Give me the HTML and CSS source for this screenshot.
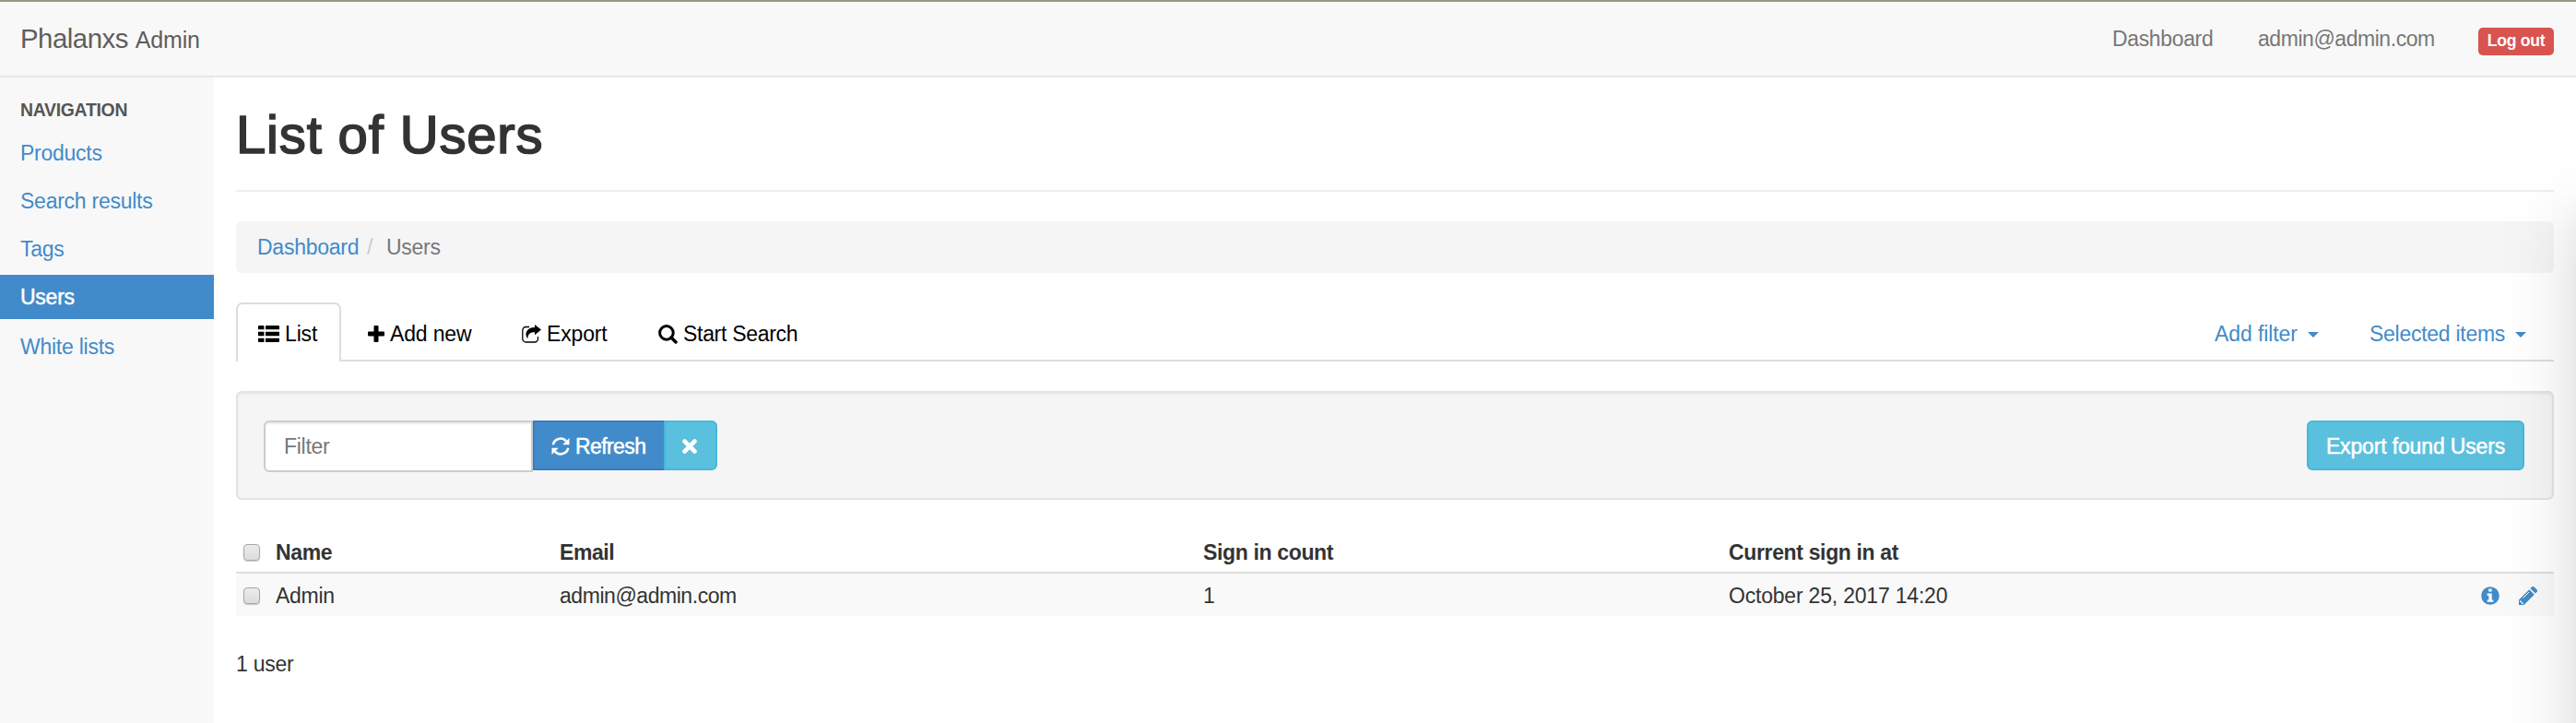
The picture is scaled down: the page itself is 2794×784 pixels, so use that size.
FILE: index.html
```html
<!DOCTYPE html>
<html lang="en">
<head>
<meta charset="utf-8">
<title>List of Users</title>
<link rel="stylesheet" href="styles.css">
</head>
<body>
<header class="navbar">
  <a class="brand"><span class="brand-name">Phalanxs</span> <small>Admin</small></a>
  <nav class="nav-right">
    <a class="nav-dash">Dashboard</a>
    <a class="nav-mail">admin@admin.com</a>
    <a class="label-danger"><span>Log out</span></a>
  </nav>
</header>
<div class="page">
  <aside class="sidebar">
    <div class="side-head"><span>NAVIGATION</span></div>
    <a class="side-link">Products</a>
    <a class="side-link">Search results</a>
    <a class="side-link">Tags</a>
    <a class="side-link active">Users</a>
    <a class="side-link last">White lists</a>
  </aside>
  <main class="content">
    <h1><span>List of Users</span></h1>
    <div class="breadcrumb"><a>Dashboard</a><i>/</i><span>Users</span></div>
    <div class="tabs">
      <a class="tab tab-active"><svg width="23" height="18" viewBox="0 0 23 18"><path d="M1 0h4.500a1 1 0 0 1 1 1v3.200H0V1a1 1 0 0 1 1-1zM9 0h13a1 1 0 0 1 1 1v3.200H8V1a1 1 0 0 1 1-1zM0 6.800h6.500v4.400H0zM8 6.800h15v4.400H8zM0 13.800h6.500V18H1a1 1 0 0 1-1-1zM8 13.800h15V17a1 1 0 0 1-1 1H8z"/></svg><span>List</span></a>
      <a class="tab tab-add"><svg width="18" height="18" viewBox="0 0 18 18"><path d="M7.500 0h3a1 1 0 0 1 1 1V6.500H17a1 1 0 0 1 1 1v3a1 1 0 0 1-1 1h-5.500V17a1 1 0 0 1-1 1h-3a1 1 0 0 1-1-1v-5.500H1a1 1 0 0 1-1-1v-3a1 1 0 0 1 1-1h5.500V1a1 1 0 0 1 1-1z"/></svg><span>Add new</span></a>
      <a class="tab tab-export"><svg width="21" height="20" viewBox="0 0 21 20"><path d="M8 2.500H4.500A3.700 3.700 0 0 0 .8 6.200v9A3.700 3.700 0 0 0 4.500 19h9.300a3.700 3.700 0 0 0 3.700-3.700V13" fill="none" stroke="#000" stroke-width="1.300"/><path d="M14 0 21 5.500l-7 5.700V8.300C9.500 8.300 6.500 10 6.300 15.500 2.500 10.500 4.500 3 14 3z"/></svg><span>Export</span></a>
      <a class="tab tab-search"><svg width="21" height="21" viewBox="0 0 21 21"><circle cx="8.900" cy="8.900" r="7.300" fill="none" stroke="#000" stroke-width="3"/><path d="m14 14 5 5" stroke="#000" stroke-width="3.400" stroke-linecap="round"/></svg><span>Start Search</span></a>
      <div class="tabs-right">
        <a class="drop"><span>Add filter</span><b class="caret"></b></a>
        <a class="drop drop-sel"><span>Selected items</span><b class="caret"></b></a>
      </div>
    </div>
    <div class="well">
      <div class="filter">
        <div class="input"><span>Filter</span></div>
        <div class="btn btn-primary"><svg width="20" height="20" viewBox="0 0 20 20"><path d="M1.800 8.200A8.200 8.200 0 0 1 16 4.400M18.200 11.800A8.200 8.200 0 0 1 4 15.600" fill="none" stroke="#fff" stroke-width="2.600"/><path d="M19.500 1v7.300h-7.300zM.5 19v-7.300h7.300z" fill="#fff"/></svg><span>Refresh</span></div>
        <div class="btn btn-close"><svg width="16" height="16" viewBox="0 0 16 16"><path d="m2.600 2.600 10.800 10.800M13.400 2.600 2.600 13.400" stroke="#fff" stroke-width="4.800" stroke-linecap="round"/></svg></div>
      </div>
      <div class="btn btn-info"><span>Export found Users</span></div>
    </div>
    <div class="table">
      <div class="row head"><span class="check"></span><span class="c-name">Name</span><span class="c-mail">Email</span><span class="c-count">Sign in count</span><span class="c-date">Current sign in at</span></div>
      <div class="row"><span class="check"></span><span class="c-name">Admin</span><span class="c-mail">admin@admin.com</span><span class="c-count">1</span><span class="c-date">October 25, 2017 14:20</span>
        <span class="actions">
          <svg width="20" height="20" viewBox="0 0 20 20"><circle cx="10" cy="10" r="9.800" fill="#428bca"/><path d="M8.300 2.600h3.300v3H8.300zM6.700 7.600h5v6.800h1.700v2.400H6.700v-2.400h1.700V10H6.700z" fill="#fff"/></svg>
          <svg width="20" height="20" viewBox="0 0 20 20"><path d="M0 20v-5.500L11.300 3.200l5.500 5.500L5.500 20zM12.400 2.100 13.900.6a2 2 0 0 1 2.800 0l2.700 2.700a2 2 0 0 1 0 2.800l-1.500 1.500z" fill="#428bca"/><path d="M4.500 12.500 11 6M1.600 15v1.700h1.700v1.700H5" fill="none" stroke="#fff" stroke-width="1"/></svg>
        </span>
      </div>
    </div>
    <div class="total">1 user</div>
  </main>
</div>
<div class="edge-shade"></div>
</body>
</html>
```
FILE: styles.css
```css
* { box-sizing: border-box; }
body { margin: 0; height: 784px; position: relative; background: #fff; color: #333; font: 23px/32px "Liberation Sans", Arial, sans-serif; letter-spacing: -0.27px; white-space: nowrap; }
svg { display: block; flex: none; }
a { color: #428bca; }
.navbar { height: 84px; border-top: 2px solid #9b9588; border-bottom: 2px solid #e7e7e7; background: #f8f8f8; display: flex; justify-content: space-between; padding: 0 24px 0 22px; }
.brand { color: #5e5e5e; font-size: 29.4px; line-height: 80px; }
.brand-name { letter-spacing: -0.5px; }
.brand small { font-size: 25px; letter-spacing: -0.2px; }
.nav-right { display: flex; padding-top: 24px; }
.nav-right a { color: #777; }
.nav-dash { width: 158px; letter-spacing: -0.35px; }
.nav-mail { width: 239px; letter-spacing: -0.45px; }
.nav-right .label-danger { background: #d9534f; color: #fff; width: 82px; height: 30px; margin-top: 4px; border-radius: 5px; font-size: 17.6px; font-weight: bold; line-height: 29px; text-align: center; }
.page { display: flex; height: 700px; }
.sidebar { width: 232px; background: #f8f8f8; padding-top: 20px; display: flex; flex-direction: column; }
.side-head { height: 38px; padding-left: 22px; font-size: 19.4px; line-height: 30px; font-weight: bold; color: #555; }
.side-link { height: 48px; margin-bottom: 4px; line-height: 48px; padding-left: 22px; letter-spacing: -0.25px; }
.side-link.active { background: #428bca; color: #fff; -webkit-text-stroke: 0.5px #fff; }
.side-link.last { margin-top: 2px; }
.content { flex: none; width: 2514px; margin-left: 24px; }
h1 { margin: 0 0 32px; height: 124px; padding-top: 30px; line-height: 64px; font-size: 58px; font-weight: 400; letter-spacing: 0.85px; border-bottom: 2px solid #eee; -webkit-text-stroke: 1.7px #333; }
.breadcrumb { height: 56px; background: #f5f5f5; border-radius: 6px; padding-left: 23px; line-height: 57px; display: flex; color: #777; }
.breadcrumb a { width: 119px; letter-spacing: -0.25px; }
.breadcrumb i { width: 21px; font-style: normal; color: #ccc; }
.tabs { height: 64px; margin-top: 32px; border-bottom: 2px solid #ddd; display: flex; }
.tab { height: 62px; display: flex; align-items: center; color: #000; gap: 6px; padding-top: 6px; letter-spacing: -0.15px; }
.tab-active { width: 114px; height: 64px; padding: 2px 0 0 22px; border: 2px solid #ddd; border-bottom: 0; border-radius: 7px 7px 0 0; background: #fff; }
.tab-add { margin-left: 29px; width: 167px; }
.tab-export { width: 148px; }
.tab-search { letter-spacing: -0.3px; }
.tabs-right { margin-left: auto; display: flex; padding-top: 2px; }
.drop { display: flex; align-items: center; width: 168px; height: 60px; padding-top: 4px; letter-spacing: -0.1px; }
.drop-sel { width: 200px; letter-spacing: -0.27px; }
.caret { border: 6.5px solid transparent; border-top: 6px solid #428bca; border-bottom: 0; margin: 2px 0 0 11px; }
.well { height: 118px; margin-top: 32px; border: 2px solid #e3e3e3; border-radius: 6px; background: #f5f5f5; box-shadow: inset 0 2px 2px rgba(0,0,0,.05); padding: 30px 30px 0 28px; display: flex; justify-content: space-between; }
.filter { display: flex; align-items: flex-start; }
.input { width: 292px; height: 56px; border: 2px solid #ccc; background: #fff; border-radius: 6px 0 0 6px; padding-left: 20px; color: #777; line-height: 53px; box-shadow: inset 0 2px 2px rgba(0,0,0,.075); }
.btn { height: 54px; border: 2px solid #46b8da; background: #5bc0de; color: #fff; display: flex; align-items: center; padding-top: 1px; -webkit-text-stroke: 0.5px #fff; }
.btn-primary { width: 142px; background: #428bca; border-color: #357ebd; border-right: 0; padding-left: 18px; gap: 6px; letter-spacing: -0.6px; }
.btn-close { width: 58px; border-radius: 0 6px 6px 0; padding-left: 18px; }
.btn-info { width: 236px; border-radius: 6px; justify-content: center; letter-spacing: -0.15px; }
.table { padding-top: 32px; }
.row { height: 46px; background: #f9f9f9; display: flex; align-items: center; padding: 2px 0 0 8px; }
.head { height: 48px; background: #fff; border-bottom: 2px solid #ddd; font-weight: bold; padding-top: 3px; letter-spacing: -0.35px; }
.check { width: 18px; height: 18px; margin: 0 17px 0 0; border: 1px solid #a6a6a6; border-radius: 4px; background: linear-gradient(#ececec, #dcdcdc); box-shadow: 0 1px 1px rgba(0,0,0,.2); }
.c-name { width: 308px; }
.c-mail { width: 698px; letter-spacing: -0.45px; }
.c-count { width: 570px; }
.row .c-date { letter-spacing: -0.2px; }
.head .c-date { letter-spacing: -0.35px; }
.actions { margin-left: auto; padding-right: 18px; display: flex; gap: 21px; }
.total { margin-top: 36px; }
.edge-shade { position: absolute; right: 0; top: 170px; width: 84px; height: 614px; background: linear-gradient(90deg, transparent, rgba(0,0,0,.008) 30%, rgba(0,0,0,.026) 60%, rgba(0,0,0,.055) 83%, rgba(0,0,0,.085)); -webkit-mask-image: linear-gradient(transparent, rgba(0,0,0,.2) 40px, rgba(0,0,0,.8) 85px, #000 125px); mask-image: linear-gradient(transparent, rgba(0,0,0,.2) 40px, rgba(0,0,0,.8) 85px, #000 125px); }
```
